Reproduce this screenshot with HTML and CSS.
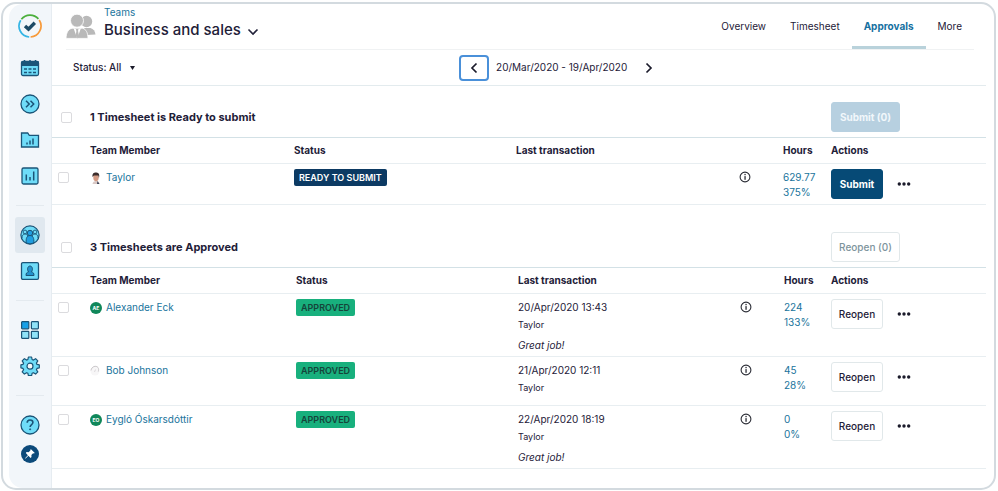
FILE: index.html
```html
<!DOCTYPE html>
<html lang="en">
<head>
<meta charset="utf-8">
<title>Business and sales - Approvals</title>
<link rel="stylesheet" href="styles.css">
</head>
<body>
<svg class="defs" aria-hidden="true">
  <symbol id="info" viewBox="0 0 12 12"><circle cx="6" cy="6" r="4.9" fill="none" stroke="#2b2d36" stroke-width="1.1"/><rect x="5.4" y="5.1" width="1.3" height="3.7" fill="#2b2d36"/><rect x="5.4" y="2.9" width="1.3" height="1.3" fill="#2b2d36"/></symbol>
  <symbol id="dots" viewBox="0 0 14 4"><g fill="#1b1b2b"><circle cx="2.3" cy="2" r="1.7"/><circle cx="7" cy="2" r="1.7"/><circle cx="11.7" cy="2" r="1.7"/></g></symbol>
</svg>
<div class="window">
  <nav class="sidebar" aria-label="Main">
    <a class="logo" href="#" aria-label="Home">
      <svg viewBox="0 0 24 24" width="24" height="24" fill="none" stroke-width="1.7"><path d="M3.4 5.2A11 11 0 0 1 20.4 4.9" stroke="#4caf3c"/><path d="M21.2 6A11 11 0 0 1 12.6 23" stroke="#f79a3a"/><path d="M11.2 23A11 11 0 0 1 2.7 6.2" stroke="#35b5e5"/><path d="M7 11.9l3.5 3.2 6.3-6.4" stroke="#1d4a66" stroke-width="3.4"/></svg>
    </a>
    <a class="item" href="#" aria-label="Calendar">
      <svg viewBox="0 0 20 20" width="20" height="20"><rect x="1.5" y="3.5" width="17" height="14" rx="1.5" fill="#6fdcf8" stroke="#1b5578" stroke-width="1.3"/><path d="M1 3.5h18V8H1z" fill="#1b5578"/><path d="M4.5 2v3M10 2v3M15.5 2v3" stroke="#1b5578" stroke-width="1.5"/><path d="M4 11h3M8.5 11h3M13 11h3M4 14.5h3M8.5 14.5h3M13 14.5h3" stroke="#1b5578" stroke-width="1.6"/></svg>
    </a>
    <a class="item" href="#" aria-label="Expand">
      <svg viewBox="0 0 20 20" width="20" height="20" fill="none" stroke="#1b5578" stroke-width="1.3"><circle cx="10" cy="10" r="9" fill="#6fdcf8"/><path d="M6 6.8L9.2 10 6 13.2M10.5 6.8l3.2 3.2-3.2 3.2" stroke-width="1.5"/></svg>
    </a>
    <a class="item" href="#" aria-label="Projects">
      <svg viewBox="0 0 20 20" width="20" height="20" fill="none" stroke="#1b5578" stroke-width="1.3"><path d="M1.5 17V3h6.2l1.6 2.3h9.2V17z" fill="#6fdcf8"/><path d="M7 14.5v-2M10 14.5v-4M13 14.5v-6" stroke-width="1.5"/></svg>
    </a>
    <a class="item" href="#" aria-label="Reports">
      <svg viewBox="0 0 20 20" width="20" height="20" fill="none" stroke="#1b5578" stroke-width="1.3"><rect x="2" y="2" width="16" height="16" rx="1.5" fill="#6fdcf8"/><path d="M6.3 14.5v-6M10 14.5v-3.5M13.7 14.5v-9" stroke-width="1.5"/></svg>
    </a>
    <hr>
    <a class="item current" href="#" aria-label="Teams" aria-current="page">
      <svg viewBox="0 0 20 20" width="20" height="20" stroke="#1b5578"><circle cx="10" cy="10" r="9.1" fill="#6fdcf8" stroke-width="1.2"/><g fill="#6fdcf8" stroke-width=".9"><circle cx="5" cy="7" r="1.9"/><circle cx="15" cy="7" r="1.9"/><path d="M2 13.5c0-3 1-4.5 3-4.5s3 1.5 3 4M12 13c0-2.5 1-4 3-4s3 1.5 3 4.5"/></g><g fill="#1f9de0" stroke-width="1"><path d="M6.2 18c-.4-5 .8-7.5 3.8-7.5s4.2 2.5 3.8 7.5q-3.8 1.7-7.6 0z"/><circle cx="10" cy="8" r="2.7"/></g></svg>
    </a>
    <a class="item" href="#" aria-label="People">
      <svg viewBox="0 0 20 20" width="20" height="20" stroke="#1b5578"><rect x="1.5" y="1.7" width="17" height="16.6" rx="1.3" fill="#6fdcf8" stroke-width="1.3"/><path d="M6 14.5c0-2.3.8-3.300 2.700-3.800-2-1.500-1.300-5.700 1.300-5.700s3.300 4.200 1.300 5.700c1.900.5 2.700 1.500 2.700 3.800z" fill="#2292cc" stroke-width="1"/></svg>
    </a>
    <hr>
    <a class="item" href="#" aria-label="Apps">
      <svg viewBox="0 0 20 20" width="20" height="20" stroke="#1b5578" stroke-width="1.2" fill="#8fe3f8"><rect x="1.6" y="1.6" width="7.2" height="7.2" rx=".7" fill="#18a0e6"/><rect x="11.4" y="1.6" width="7" height="7.2" rx=".7"/><rect x="1.6" y="11.4" width="7.2" height="7" rx=".7"/><rect x="11.4" y="11.4" width="7" height="7" rx=".7"/></svg>
    </a>
    <a class="item" href="#" aria-label="Settings">
      <svg viewBox="0 0 20 20" width="20" height="20" stroke="#1b5578" stroke-width="1.2" stroke-linejoin="round"><path d="M8.400 1h3.200l.5 2.500 1.300.6 2.200-1.400 2.200 2.200-1.400 2.200.6 1.300 2.300.5v2.900l-2.300.6-.6 1.300 1.400 2.200-2.200 2.200-2.200-1.400-1.300.6-.5 2.300H8.400l-.5-2.300-1.300-.6-2.200 1.400-2.200-2.200 1.400-2.200-.6-1.300L.9 11.800V8.900l2.100-.5.6-1.300-1.400-2.200 2.200-2.200 2.200 1.400 1.300-.6z" fill="#6fdcf8"/><circle cx="10" cy="10.2" r="3" fill="#f4f7fa"/></svg>
    </a>
    <hr>
    <a class="item" href="#" aria-label="Help">
      <svg viewBox="0 0 20 20" width="20" height="20" fill="none" stroke="#1b5578" stroke-width="1.3"><circle cx="10" cy="10" r="9" fill="#6fdcf8"/><path d="M7.2 7.7c0-3.7 5.7-3.5 5.7-.2 0 2-2.8 2.2-2.8 4.5" stroke-width="1.6"/><circle cx="10.1" cy="14.3" r=".6" fill="#1b5578" stroke-width=".8"/></svg>
    </a>
    <button class="pin" type="button" aria-label="Pin sidebar">
      <svg viewBox="0 0 18 18" width="18" height="18"><circle cx="9" cy="9" r="9" fill="#0c4a7a"/><path d="M10 4.3l3.8 3.7-1 .5-.7-.2-1.7 1.8.1 2-.9.8-2.200-2.200-2.700 2.700-.6.200.2-.7 2.600-2.700-2.100-2.200.8-.9 2 .1 1.800-1.800-.2-.7z" fill="#fff"/></svg>
    </button>
  </nav>

  <main class="main">
    <header class="header">
      <svg class="team-icon" viewBox="0 0 30 26" width="30" height="26"><g fill="#b9b9b9"><circle cx="20.5" cy="8.5" r="5.7"/><path d="M18 15h6.5c3 1 4.5 3 5 6.500l-9.500.5z"/></g><g fill="#b9b9b9" stroke="#fff" stroke-width=".8"><circle cx="11" cy="7.7" r="6.5"/><path d="M0 25.400c.3-6 2.200-9 6-10.200h10.500c3.800 1.200 5.200 4.200 5.500 10.200z"/></g><path d="M7.500 15l3.700 10.500L15 15l-2.700 1.200-.3 2h-1.500l-.5-2z" fill="#fff"/><path d="M10.500 17.500h1.500l.9 5-1.600 3-1.700-3z" fill="#b9b9b9"/></svg>
      <div class="title">
        <a href="#">Teams</a>
        <h1>Business and sales <svg viewBox="0 0 12 8" width="12" height="8"><path d="M1.500 1.500L6 6l4.500-4.500" fill="none" stroke="#22223a" stroke-width="1.6"/></svg></h1>
      </div>
      <nav class="tabs" aria-label="Team">
        <a href="#">Overview</a>
        <a href="#">Timesheet</a>
        <a class="active" href="#" aria-current="page">Approvals</a>
        <a href="#">More</a>
      </nav>
    </header>

    <div class="toolbar">
      <button class="filter" type="button">Status: All <svg viewBox="0 0 5 4" width="5" height="4"><path d="M0 0h5L2.500 4z" fill="#1b1b2b"/></svg></button>
      <div class="period">
        <button class="step focus" type="button" aria-label="Previous period"><svg viewBox="0 0 8 12" width="8" height="12"><path d="M6.500 1.500L2 6l4.500 4.500" fill="none" stroke="#1b1b2b" stroke-width="1.7"/></svg></button>
        <span>20/Mar/2020 - 19/Apr/2020</span>
        <button class="step" type="button" aria-label="Next period"><svg viewBox="0 0 8 12" width="8" height="12"><path d="M1.500 1.500L6 6l-4.500 4.500" fill="none" stroke="#1b1b2b" stroke-width="1.7"/></svg></button>
      </div>
    </div>

    <section>
      <div class="group">
        <input type="checkbox" aria-label="Select all ready timesheets">
        <h2>1 Timesheet is Ready to submit</h2>
        <button class="btn primary faded" type="button">Submit (0)</button>
      </div>
      <table>
        <colgroup><col class="c-check"><col class="c-member"><col class="c-status"><col><col class="c-info"><col class="c-hours"><col class="c-actions"></colgroup>
        <thead><tr><td></td><th>Team Member</th><th>Status</th><th>Last transaction</th><td></td><th>Hours</th><th>Actions</th></tr></thead>
        <tbody>
          <tr>
            <td class="check"><input type="checkbox" aria-label="Select Taylor"></td>
            <td class="text"><a class="member" href="#"><svg viewBox="0 0 12 12" width="12" height="12"><path d="M2.500 12c.3-2 1.500-3 3.700-3s3 1 3.300 3z" fill="#d9c9c6"/><path d="M7.500 9l2 3H7z" fill="#384257"/><ellipse cx="6" cy="5.500" rx="2.700" ry="3.800" fill="#d39a83"/><path d="M2.600 5C1.800 1.500 4 .3 6.500.5S9.800 2.500 9 6L8.300 3.600 4 3.400z" fill="#3b2d2b"/></svg>Taylor</a></td>
            <td><span class="badge ready">READY TO SUBMIT</span></td>
            <td></td>
            <td><svg class="info" width="12" height="12"><use href="#info"/></svg></td>
            <td class="text"><a class="hours" href="#">629.77<br>375%</a></td>
            <td><div class="actions"><button class="btn primary" type="button">Submit</button><button class="more" type="button" aria-label="More actions"><svg width="14" height="4"><use href="#dots"/></svg></button></div></td>
          </tr>
        </tbody>
      </table>
    </section>

    <section class="approved">
      <div class="group">
        <input type="checkbox" aria-label="Select all approved timesheets">
        <h2>3 Timesheets are Approved</h2>
        <button class="btn faded" type="button">Reopen (0)</button>
      </div>
      <table>
        <colgroup><col class="c-check"><col class="c-member"><col class="c-status"><col><col class="c-info"><col class="c-hours"><col class="c-actions"></colgroup>
        <thead><tr><td></td><th>Team Member</th><th>Status</th><th>Last transaction</th><td></td><th>Hours</th><th>Actions</th></tr></thead>
        <tbody>
          <tr>
            <td class="check"><input type="checkbox" aria-label="Select Alexander Eck"></td>
            <td class="text"><a class="member" href="#"><span class="initials">AE</span>Alexander Eck</a></td>
            <td><span class="badge ok">APPROVED</span></td>
            <td class="text">20/Apr/2020 13:43<p class="by">Taylor</p><p class="note">Great job!</p></td>
            <td><svg class="info" width="12" height="12"><use href="#info"/></svg></td>
            <td class="text"><a class="hours" href="#">224<br>133%</a></td>
            <td><div class="actions"><button class="btn" type="button">Reopen</button><button class="more" type="button" aria-label="More actions"><svg width="14" height="4"><use href="#dots"/></svg></button></div></td>
          </tr>
          <tr>
            <td class="check"><input type="checkbox" aria-label="Select Bob Johnson"></td>
            <td class="text"><a class="member" href="#"><svg viewBox="0 0 12 12" width="12" height="12"><circle cx="5" cy="6" r="4.5" fill="#f7f6f7"/><path d="M1 5.500C1.500 1.500 6 0 8 2.500c1 1.500.5 3 .3 4" fill="none" stroke="#c9c6c9"/><path d="M5.500 4.500L4.500 7" stroke="#d4d1d4" stroke-width=".8"/></svg>Bob Johnson</a></td>
            <td><span class="badge ok">APPROVED</span></td>
            <td class="text">21/Apr/2020 12:11<p class="by">Taylor</p></td>
            <td><svg class="info" width="12" height="12"><use href="#info"/></svg></td>
            <td class="text"><a class="hours" href="#">45<br>28%</a></td>
            <td><div class="actions"><button class="btn" type="button">Reopen</button><button class="more" type="button" aria-label="More actions"><svg width="14" height="4"><use href="#dots"/></svg></button></div></td>
          </tr>
          <tr>
            <td class="check"><input type="checkbox" aria-label="Select Eygló Óskarsdóttir"></td>
            <td class="text"><a class="member" href="#"><span class="initials">EO</span>Eygló Óskarsdóttir</a></td>
            <td><span class="badge ok">APPROVED</span></td>
            <td class="text">22/Apr/2020 18:19<p class="by">Taylor</p><p class="note">Great job!</p></td>
            <td><svg class="info" width="12" height="12"><use href="#info"/></svg></td>
            <td class="text"><a class="hours" href="#">0<br>0%</a></td>
            <td><div class="actions"><button class="btn" type="button">Reopen</button><button class="more" type="button" aria-label="More actions"><svg width="14" height="4"><use href="#dots"/></svg></button></div></td>
          </tr>
        </tbody>
      </table>
    </section>
  </main>
</div>
</body>
</html>
```
FILE: styles.css
```css
* { box-sizing: border-box; }
body {
  margin: 0;
  background: #fff;
  color: #1e2038;
  font: 10px/15px Inter, "Liberation Sans", sans-serif;
}
a { color: #20749c; text-decoration: none; }
h1, h2, p { margin: 0; }
button { font: inherit; color: inherit; cursor: pointer; }
svg { display: block; }
.defs { display: none; }

.window {
  display: flex;
  min-height: calc(100vh - 3px);
  margin: 2px 2px 1px 1px;
  border: 2px solid #d3dadf;
  border-radius: 15px;
  overflow: hidden;
}

.sidebar {
  display: flex;
  flex: none;
  flex-direction: column;
  align-items: center;
  width: 43px;
  margin-left: 6px;
  padding-top: 10px;
  background: #f2f6fa;
  border-right: 1px solid #e6ecf1;
  border-radius: 14px 0 0 14px;
}
.logo { margin-bottom: 12px; }
.item {
  display: flex;
  align-items: center;
  justify-content: center;
  width: 30px;
  height: 36px;
  border-radius: 3px;
}
.item.current { background: #e0e8ef; }
.sidebar hr {
  width: 28px;
  margin: 11px 0;
  border: 0;
  border-top: 1px solid #e4eaef;
}
.pin { margin-top: 2px; padding: 0; border: 0; background: none; }

.main { flex: 1; min-width: 0; padding-right: 8px; }

.header {
  display: flex;
  align-items: flex-start;
  height: 46px;
  margin: 0 12px 0 14px;
  border-bottom: 1px solid #f0f2f3;
}
.team-icon { margin-top: 9px; }
.title { margin-left: 8px; padding-top: 1px; }
.title a { display: block; line-height: 14px; }
.title h1 {
  display: flex;
  align-items: center;
  gap: 6px;
  font-size: 15px;
  font-weight: 500;
  line-height: 21px;
}
.title h1 svg { margin-top: 4px; }
.tabs { display: flex; margin-left: auto; align-self: stretch; }
.tabs a {
  padding: 15px 12px 0;
  color: #1e2038;
  border-bottom: 3px solid transparent;
}
.tabs .active { color: #15709f; font-weight: 700; border-color: #b9d2db; }

.toolbar {
  display: grid;
  grid-template-columns: 6fr auto 5fr;
  align-items: center;
  height: 36px;
  padding-left: 21px;
  border-bottom: 1px solid #e3ebee;
}
.filter {
  display: flex;
  align-items: center;
  justify-self: start;
  gap: 9px;
  padding: 0;
  border: 0;
  background: none;
  font-weight: 500;
}
.period { display: flex; align-items: center; gap: 7px; }
.step {
  display: flex;
  align-items: center;
  justify-content: center;
  width: 30px;
  height: 26px;
  padding: 0;
  border: 2px solid transparent;
  border-radius: 4px;
  background: none;
}
.step.focus { border-color: #4a90d9; }

.group {
  display: flex;
  align-items: center;
  padding: 16px 0 5px 9px;
  border-bottom: 1px solid #d3e1e6;
}
.approved .group { padding-top: 27px; }
.group h2 { flex: 1; margin-left: 18px; font-size: 11px; font-weight: 700; }
.group .btn { margin-right: 86px; width: 69px; }

input[type="checkbox"] {
  appearance: none;
  display: block;
  width: 11px;
  height: 11px;
  margin: 0;
  border: 1px solid #dbdbde;
  border-radius: 2px;
  background: #fff;
}

table { width: 100%; border-collapse: separate; border-spacing: 0; table-layout: fixed; }
td, th { padding: 5px 0; border-bottom: 1px solid #e8eef1; text-align: left; vertical-align: top; }
td.text { padding: 6px 0 4px; }
th { font-weight: 700; }
.c-check { width: 38px; }
.c-member { width: 204px; }
.c-status { width: 222px; }
.c-info { width: 44px; }
.c-hours { width: 48px; }
.c-actions { width: 155px; }
.approved .c-member { width: 206px; }
.approved .c-hours { width: 47px; }
td.check { padding: 8px 0 0 6px; }

.member { display: flex; align-items: center; gap: 4px; }
.initials {
  width: 12px;
  height: 12px;
  border-radius: 50%;
  background: #10875a;
  color: #fff;
  font-size: 5px;
  font-weight: 700;
  line-height: 12px;
  text-align: center;
}
.badge {
  display: inline-block;
  height: 17px;
  padding: 0 5px;
  border-radius: 2px;
  font-size: 9px;
  font-weight: 600;
  line-height: 17px;
  vertical-align: top;
}
.ready { background: #0c3a63; color: #fff; }
.ok { background: #18b07d; color: #15443a; }
.info { margin-top: 2px; }
.by { margin: 3px 0 6px; font-size: 9px; line-height: 14px; }
.note { font-style: italic; line-height: 14px; }
.hours { display: block; }

.actions { display: flex; align-items: center; gap: 14px; }
.btn {
  width: 52px;
  height: 30px;
  padding: 0;
  border: 1px solid #e1e8ea;
  border-radius: 3px;
  background: #fff;
  font-weight: 500;
}
.btn.primary { border-color: #064a76; background: #064a76; color: #fff; font-weight: 700; }
.btn.faded { color: #7d949c; }
.btn.primary.faded { border-color: #b7d0e0; background: #b7d0e0; color: #f1f7fb; }
.more { padding: 4px 0; border: 0; background: none; }
```
